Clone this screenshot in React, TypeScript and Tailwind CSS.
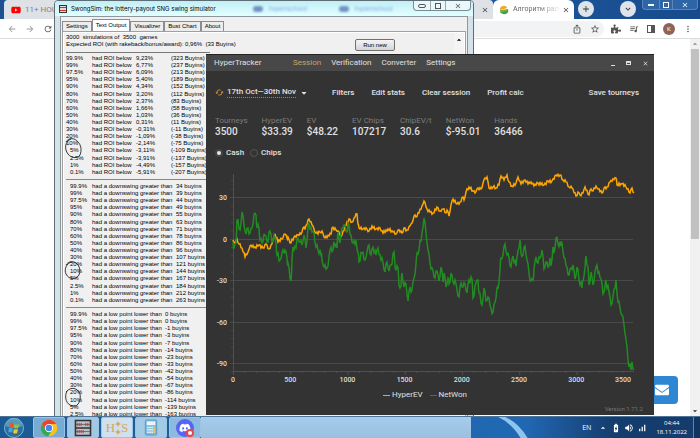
import React, { useState } from 'react'
import { FaYoutube, FaEnvelope, FaDiscord, FaPuzzlePiece, FaCaretDown } from 'react-icons/fa'
import {
  MdArrowBack, MdArrowForward, MdRefresh, MdStarBorder, MdIosShare, MdQueueMusic, MdMoreVert, MdClose, MdAdd,
  MdKeyboardArrowDown, MdCached, MdVolumeUp, MdSignalCellularAlt, MdBatteryChargingFull, MdArrowDropUp, MdArrowDropDown,
} from 'react-icons/md'

type Point = [number, number]

const levels = ['99.9%', '99%', '97.5%', '95%', '90%', '80%', '70%', '60%', '50%', '40%', '30%', '20%', '10%', '5%', '2.5%', '1%', '0.1%']

const roi = ['9,23%', '6,77%', '6,09%', '5,40%', '4,34%', '3,20%', '2,37%', '1,66%', '1,03%', '0,31%', '-0,31%', '-1,09%', '-2,14%', '-3,11%', '-3,91%', '-4,49%', '-5,91%']
const roiBuyins = [323, 237, 213, 189, 152, 112, 83, 58, 36, 11, -11, -38, -75, -109, -137, -157, -207]
const downswings = [34, 39, 44, 49, 55, 63, 71, 78, 86, 96, 107, 121, 144, 167, 184, 212, 263]
const lowPoints = [0, 0, -1, -3, -7, -14, -23, -33, -42, -54, -67, -86, -114, -139, -163]

const stats = [
  { label: 'Tourneys', value: '3500' },
  { label: 'HyperEV', value: '$33.39' },
  { label: 'EV', value: '$48.22' },
  { label: 'EV Chips', value: '107217' },
  { label: 'ChipEV/t', value: '30.6' },
  { label: 'NetWon', value: '$-95.01' },
  { label: 'Hands', value: '36466' },
]

// offsets from the chart origin (0 tourneys, $0)
const hyperEv: Point[] = [
  [0, 1], [2, 4], [4, 0], [6, 5], [9, 9], [12, 18], [15, 13], [17, 7], [22, 8], [26, 6], [30, 9], [33, 5], [36, 10], [39, 5],
  [42, -5], [45, 3], [49, 0], [52, -5], [54, -1], [55, -2], [57, 4], [61, -2], [65, -4], [69, -7], [71, -12], [72, -10],
  [76, -20], [79, -14], [81, -10], [83, -6], [87, -7], [89, -8], [91, -2], [96, -3], [98, -5], [99, -11], [103, -9],
  [105, -8], [107, -4], [109, -4], [112, -13], [116, -20], [119, -17], [122, -22], [124, -25], [125, -15], [126, -11],
  [130, -10], [134, -10], [136, -8], [139, -13], [143, -10], [147, -11], [150, -6], [155, -10], [160, -7], [163, -5],
  [165, -9], [169, -6], [171, -11], [174, -9], [177, -13], [179, -16], [181, -23], [183, -22], [186, -26], [189, -33],
  [191, -38], [194, -30], [197, -27], [200, -26], [204, -32], [207, -28], [210, -30], [213, -26], [214, -29], [216, -23],
  [218, -34], [220, -40], [224, -35], [227, -37], [230, -42], [231, -39], [233, -47], [236, -52], [240, -48], [242, -46],
  [244, -50], [248, -50], [250, -56], [252, -61], [254, -62], [256, -51], [260, -52], [263, -51], [266, -54], [268, -63],
  [271, -59], [274, -64], [276, -57], [279, -53], [283, -56], [285, -62], [288, -55], [292, -59], [295, -55], [298, -57],
  [301, -53], [305, -56], [311, -54], [315, -58], [319, -58], [323, -64], [327, -64], [330, -59], [333, -57], [336, -52],
  [339, -51], [343, -43], [345, -47], [347, -44], [350, -46], [352, -52], [356, -44], [358, -50], [360, -48], [363, -53],
  [365, -50], [369, -46], [371, -51], [374, -52], [377, -57], [380, -60], [383, -61], [384, -54], [389, -55], [393, -52],
  [397, -46], [399, -51], [401, -46],
]

const netWon: Point[] = [
  [0, 3], [1, 9], [3, 4], [4, -19], [7, -9], [9, -27], [11, -14], [13, -5], [15, -11], [17, -6], [19, -11], [21, -25],
  [23, -24], [24, -11], [26, -11], [27, 1], [29, 4], [32, -4], [34, 3], [37, -8], [39, 3], [41, -4], [43, 4], [44, 16],
  [47, 21], [49, 14], [51, 14], [52, 11], [54, 19], [55, 24], [58, 42], [59, 21], [60, 8], [63, 9], [65, -1], [67, 3],
  [69, 6], [71, -4], [73, 9], [75, -12], [76, -16], [79, -7], [81, -6], [83, 8], [85, 11], [88, 16], [89, 21], [91, 28],
  [94, 29], [96, 18], [98, 8], [100, 11], [101, 3], [104, 9], [105, -7], [107, 4], [109, -11], [111, -14], [114, -7],
  [115, -16], [118, -4], [120, 4], [123, 1], [125, 14], [126, 23], [129, 14], [132, 21], [134, 13], [136, 6], [138, 16],
  [140, 8], [143, 16], [145, 9], [148, 21], [150, 24], [152, 33], [154, 23], [156, 32], [158, 26], [161, 13], [162, 28],
  [165, 29], [166, 46], [168, 47], [169, 34], [171, 48], [173, 45], [175, 62], [177, 48], [179, 51], [181, 39], [183, 25],
  [184, 14], [186, 11], [189, -6], [191, -21], [193, -6], [195, 11], [197, 24], [199, 29], [201, 38], [204, 32], [206, 42],
  [208, 28], [210, 43], [211, 34], [213, 48], [215, 39], [216, 45], [218, 34], [220, 43], [222, 41], [224, 51], [226, 58],
  [228, 44], [230, 48], [232, 45], [234, 54], [236, 41], [239, 40], [240, 59], [243, 44], [245, 41], [246, 54], [249, 66],
  [251, 49], [253, 62], [255, 58], [258, 69], [260, 73], [262, 63], [264, 49], [265, 50], [267, 31], [268, 19], [270, 16],
  [272, 5], [274, 16], [276, 18], [278, 28], [280, 17], [283, 27], [285, 12], [287, 1], [288, 15], [290, 16], [292, 7],
  [294, 21], [296, 34], [298, 42], [300, 41], [301, 30], [303, 18], [305, 24], [307, 19], [309, 11], [311, 30], [313, 23],
  [315, 28], [317, 19], [318, 27], [320, 8], [321, 14], [323, -1], [325, 5], [328, 7], [329, 4], [331, 19], [334, 28],
  [336, 36], [338, 29], [340, 26], [342, 40], [344, 28], [346, 41], [349, 49], [350, 42], [352, 29], [353, 17], [355, 28],
  [356, 46], [358, 33], [360, 46], [363, 28], [366, 33], [368, 40], [370, 55], [372, 48], [373, 42], [376, 53], [378, 66],
  [380, 57], [383, 41], [385, 63], [387, 69], [389, 76], [391, 86], [393, 100], [395, 121], [398, 131], [399, 123], [401, 131],
]

// walks between the sampled points with a small zigzag
function jagged(points: Point[], amp: number) {
  const out: string[] = []
  points.forEach(([x, y], i) => {
    out.push(`${x},${y}`)
    const next = points[i + 1]
    if (!next) return
    const steps = Math.max(2, next[0] - x)
    for (let s = 1; s < steps; s++) {
      const t = s / steps
      const wobble = ((i + s) % 2 ? 1 : -1) * amp * (0.5 + ((i * 7 + s * 3) % 5) / 5)
      out.push(`${(x + (next[0] - x) * t).toFixed(1)},${(y + (next[1] - y) * t + wobble).toFixed(1)}`)
    }
  })
  return out.join(' ')
}

function Chart() {
  const ticks = Array.from({ length: 35 }, (_, i) => i)
  return (
    <svg viewBox="0 0 448 220" className="block w-full font-[Roboto,sans-serif]" role="img" aria-label="HyperEV and NetWon by tourneys">
      <g transform="translate(27 71)">
        {[-42, 0, 41, 83, 124].map((y, i) => (
          <g key={y}>
            <line x1="-3" x2="400" y1={y + 0.5} y2={y + 0.5} stroke="#4a4a4a" />
            <text x="-6" y={y + 3} textAnchor="end" fontSize="7" fill="#dcdcdc">{30 - i * 30}</text>
          </g>
        ))}
        <path d="M0.5 -65V132.500H401" fill="none" stroke="#505050" />
        {ticks.map(i => <line key={i} x1={i * 11.45 + 0.5} x2={i * 11.45 + 0.5} y1="132" y2={i % 5 ? 134 : 136} stroke="#505050" />)}
        {ticks.slice(0, 24).map(i => <line key={i} x1="-2" x2="0" y1={i * 8.3 - 58} y2={i * 8.3 - 58} stroke="#484848" />)}
        {[0, 500, 1000, 1500, 2000, 2500, 3000].map((n, i) => (
          <text key={n} x={i * 57.2} y="143" textAnchor="middle" fontSize="7" fill="#dcdcdc">{n}</text>
        ))}
        <text x="398" y="143" textAnchor="end" fontSize="7" fill="#dcdcdc">3500</text>
        <polyline points={jagged(hyperEv, 1.2)} fill="none" stroke="#ffa500" strokeWidth="1.500" />
        <polyline points={jagged(netWon, 2.8)} fill="none" stroke="#228b22" strokeWidth="1.500" />
      </g>
    </svg>
  )
}

function Browser() {
  return (
    <div className="flex min-h-0 flex-1 flex-col bg-white">
      <div className="flex h-[19px] shrink-0 justify-between bg-gradient-to-r from-[#1d4f92] via-[#2462a8] to-[#174a8c] pl-1">
        <div className="flex w-[489px] items-center rounded-t bg-[#dee1e6] pl-[7px] text-[8px] text-[#7d8186]">
          <FaYoutube className="mr-1 h-2.5 w-2.5 text-[#f00]" />
          <span>11+ HOURS</span>
          <MdClose className="ml-auto mr-1 h-2 w-2 text-[#444]" />
        </div>
        <div className="flex flex-1 items-center rounded-t-md bg-white pl-1.5 text-[7px]">
          <svg viewBox="0 0 10 10" className="mr-1 h-2.5 w-2.5">
            <path d="M1 5C0 1 7-1 8 3L5 4Z" fill="#f5a623" />
            <path d="M9 4c2 5-5 7-8 3l3-1Z" fill="#43a047" />
            <path d="M1 5l8-1-1 2-7 1Z" fill="#7cb342" />
          </svg>
          <span className="flex-1 whitespace-nowrap bg-gradient-to-r from-[#555] via-[#666] to-white bg-clip-text text-transparent">Алгоритм расч</span>
          <button aria-label="Close tab" className="mr-1"><MdClose className="h-2 w-2 text-[#444]" /></button>
        </div>
        <div className="flex w-[126px] shrink-0 justify-between pl-1">
          <button aria-label="New tab" className="mt-px flex h-4 w-4 items-center justify-center rounded-full bg-[#dfe3ea]"><MdAdd className="h-2.5 w-2.5 text-[#333]" /></button>
          <button aria-label="Search tabs" className="mt-px ml-[26px] flex h-4 w-4 items-center justify-center rounded-full bg-[#dfe3ea]"><MdKeyboardArrowDown className="h-2.5 w-2.5 text-[#333]" /></button>
          <div className="ml-auto mr-0.5 flex h-2.5 rounded-b border border-t-0 border-[#5c86b8] bg-[#2d65a6] text-white">
            <button aria-label="Minimize" className="flex w-4 items-center justify-center"><span className="h-0.5 w-1.5 bg-white" /></button>
            <button aria-label="Restore" className="flex w-3.5 items-center justify-center border-x border-[#5c86b8]"><span className="h-1.5 w-1.5 border border-white" /></button>
            <button aria-label="Close" className="flex w-6 items-center justify-center"><MdClose className="h-2 w-2" /></button>
          </div>
        </div>
      </div>
      <div className="flex h-5 shrink-0 items-center border-b border-[#dcdcdc] bg-white pr-[7px] pl-[7px] text-[#555]">
        <button aria-label="Back"><MdArrowBack className="h-2.5 w-2.5 text-[#999]" /></button>
        <button aria-label="Forward" className="ml-2"><MdArrowForward className="h-2.5 w-2.5 text-[#999]" /></button>
        <button aria-label="Reload" className="ml-2"><MdRefresh className="h-2.5 w-2.5" /></button>
        <div className="ml-2 flex h-4 flex-1 items-center justify-end gap-2 rounded-full bg-[#f1f3f4] pr-1">
          <MdIosShare className="h-2.5 w-2.5" />
          <MdStarBorder className="h-2.5 w-2.5" />
        </div>
        <div className="ml-[7px] flex items-center gap-2">
          <FaPuzzlePiece className="h-2.5 w-2.5" />
          <MdQueueMusic className="h-2.5 w-2.5" />
          <span className="h-2 w-2 border border-r-4 border-[#555]" />
          <span className="flex h-3 w-3 items-center justify-center rounded-full bg-[#8d6556] text-[6px] text-white">K</span>
          <MdMoreVert className="h-2.5 w-2.5" />
        </div>
      </div>
      <div className="flex flex-1 items-end justify-end">
        <button aria-label="Write to us" className="mb-3 flex h-7 w-9 items-center justify-center rounded bg-[#2f86d3] pl-1">
          <FaEnvelope className="h-3.5 w-3.5 text-white" />
        </button>
        <div className="ml-3 flex w-2.5 flex-col items-center self-stretch bg-[#f1f1f1]">
          <MdArrowDropUp className="h-2.5 w-2.5 text-[#888]" />
          <div className="h-[190px] w-2 bg-[#c1c1c1]" />
          <MdArrowDropDown className="mt-auto h-2.5 w-2.5 text-[#333]" />
        </div>
      </div>
    </div>
  )
}

function ResultTable({ text, textWidth, values, indentFrom }: { text: string; textWidth: string; values: string[][]; indentFrom: number }) {
  return (
    <table className={`border-collapse self-start whitespace-nowrap ${values.length === 17 ? 'h-[121px]' : 'h-[107px]'}`}>
      <tbody>
        {values.map((cells, i) => (
          <tr key={levels[i]}>
            <td className="p-0"><div className={`w-[26px] ${i >= indentFrom ? 'pl-1' : ''}`}>{levels[i]}</div></td>
            <td className="p-0"><div className={textWidth}>{text}</div></td>
            {cells.map((v, c) => <td key={c} className="p-0"><div className="w-[35px]">{v}</div></td>)}
          </tr>
        ))}
      </tbody>
    </table>
  )
}

function SwongSim() {
  const [tab, setTab] = useState('Text Output')
  return (
    <section className="absolute top-0 bottom-0 left-[54px] right-[226px] flex flex-col overflow-hidden rounded-t border border-[#5d6d75] bg-[#d5e2ea] px-[5px] font-['Liberation_Sans',sans-serif] text-[6px] leading-[7px] text-black">
      <header className="-mx-[5px] flex h-[15px] shrink-0 items-center bg-gradient-to-b from-[#c2eef5] to-[#e2ffff] pl-1">
        <span className="flex h-2 w-2 flex-col justify-around border border-[#333] bg-[#ddd]"><i className="h-px bg-[#c33]" /><i className="h-px bg-[#c33]" /></span>
        <h1 className="ml-1 w-[170px] whitespace-nowrap font-[Inter,sans-serif]">SwongSim: the lottery-payout SNG swing simulator</h1>
        <div className="ml-3 flex flex-1 gap-8 overflow-hidden whitespace-nowrap text-[7px] text-[#7fb0e8] blur-[1px]" aria-hidden="true">
          <span className="flex items-center gap-1.5"><i className="h-1.5 w-2.5 rounded-full bg-[#6f93c4]" />hyperschool</span>
          <span className="flex items-center gap-1.5"><i className="h-1.5 w-2.5 rounded-full bg-[#6f93c4]" />hyperschool</span>
        </div>
        <div className="mr-0.5 flex h-2.5 self-start rounded-b border border-t-0 border-[#7c8b94] bg-[#eaf8fb]">
          <button aria-label="Minimize" className="flex w-4 items-center justify-center"><span className="h-1 w-2 rounded-xs border border-[#555]" /></button>
          <button aria-label="Maximize" className="flex w-4 items-center justify-center border-x border-[#9aa7ae]"><span className="h-1.5 w-1.5 border border-[#555]" /></button>
          <button aria-label="Close" className="flex w-6 items-center justify-center"><MdClose className="h-2 w-2 text-[#555]" /></button>
        </div>
      </header>
      <div className="flex min-h-0 flex-1 flex-col border border-b-0 border-[#8d979c] bg-[#f0f0f0] px-px">
        <nav className="flex h-3.5 shrink-0 items-end">
          {['Settings', 'Text Output', 'Visualizer', 'Bust Chart', 'About'].map(t => (
            <button
              key={t}
              onClick={() => setTab(t)}
              className={t === tab
                ? 'h-3 border border-b-0 border-[#898c95] bg-white px-[3px]'
                : 'h-2.5 border border-b-0 border-[#898c95] bg-[#ededed] px-[3px]'}
            >
              {t}
            </button>
          ))}
        </nav>
        <div className="flex min-h-0 flex-1 border border-b-0 border-[#a0a0a0] bg-white p-px pb-0">
          <div className="flex min-w-0 flex-1 flex-col bg-[#f0f0f0] pt-px pl-0.5">
            <div className="flex h-[18px] shrink-0 justify-between whitespace-nowrap">
              <p className="whitespace-pre">{'3000  simulations of  3500  games'}<br />{'Expected ROI (with rakeback/bonus/award): 0,96%  (33 Buyins)'}</p>
              <button className="mt-[5px] mr-[59px] h-3 w-10 shrink-0 rounded-xs border border-[#707070] bg-gradient-to-b from-[#f4f4f4] to-[#d5d5d5]">Run new</button>
            </div>
            <div className="h-px w-36 shrink-0 bg-[#777]" />
            <div className="relative flex flex-col pt-0.5">
              <ResultTable text="had ROI below" textWidth="w-[44px]" indentFrom={13} values={roi.map((r, i) => [r, `(${roiBuyins[i]} Buyins)`])} />
              <hr className="my-[3px] h-px border-0 bg-[#888]" />
              <ResultTable text="had a downswing greater than" textWidth="w-[84px]" indentFrom={0} values={downswings.map(d => [`${d} buyins`])} />
              <hr className="my-[3px] h-px border-0 bg-[#888]" />
              <ResultTable text="had a low point lower than" textWidth="w-[73px]" indentFrom={0} values={lowPoints.map(l => [`${l} buyins`])} />
              <svg viewBox="0 0 20 380" className="absolute top-0.5 -left-0.5 h-[380px] w-5" fill="none" stroke="#222" strokeWidth="0.9">
                <path d="M7 84C1 86 0 94 4 99c3 4 9 5 12 1 2-5 1-10-2-13-3-4-9-5-12 0" />
                <path d="M8 207c-6 1-8 8-6 12 3 6 10 6 13 1 2-6 0-11-5-13-3-1-6 0-8 3" />
                <path d="M3 336c-3 6-1 14 6 15 6 1 8-7 7-12-2-6-9-8-14-2" />
              </svg>
            </div>
          </div>
          <div className="flex w-2.5 justify-center bg-[#f4f4f4] pt-0.5"><MdArrowDropUp className="h-2.5 w-2.5" /></div>
        </div>
      </div>
    </section>
  )
}

function HyperTracker() {
  const [mode, setMode] = useState('Cash')
  return (
    <main className="absolute top-[54px] bottom-[23px] left-[206px] right-[46px] flex flex-col overflow-hidden bg-[#333] font-[Roboto,sans-serif] text-[8px] leading-[10px] font-medium text-[#e0e0e0]">
      <header className="flex h-[17px] shrink-0 items-center border-t border-[#222] bg-[#484848] pr-[5px] pl-2 font-normal">
        <h1 className="w-[79px]">HyperTracker</h1>
        <nav className="flex gap-2.5">
          <button className="text-[#c9a468]">Session</button>
          <button>Verification</button>
          <button>Converter</button>
          <button>Settings</button>
        </nav>
        <div className="ml-auto flex items-center gap-[11px]">
          <button aria-label="Minimize" className="mt-1 h-px w-1 bg-[#ddd]" />
          <button aria-label="Maximize" className="h-1 w-[5px] border border-t-2 border-[#ddd]" />
          <button aria-label="Close"><MdClose className="h-[7px] w-[7px]" /></button>
        </div>
      </header>
      <div className="flex h-[43px] shrink-0 items-center pr-[15px] pl-[9px] whitespace-nowrap">
        <button className="flex w-[117px] items-center">
          <MdCached className="mr-[3px] h-[9px] w-[9px] text-[#e0a040]" />
          <span className="border-b border-dotted border-[#888]">17th Oct—30th Nov</span>
          <FaCaretDown className="ml-1 h-2 w-2" />
        </button>
        <div className="flex gap-[17px]">
          <button>Filters</button>
          <button>Edit stats</button>
          <button>Clear session</button>
          <button>Profit calc</button>
        </div>
        <button className="ml-auto">Save tourneys</button>
      </div>
      <dl className="mt-0.5 flex gap-3.5 px-[9px]">
        {stats.map(s => (
          <div key={s.label}>
            <dt className="font-normal text-[#7c7c7c]">{s.label}</dt>
            <dd className="text-[10px] leading-3">{s.value}</dd>
          </div>
        ))}
      </dl>
      <div className="mt-2.5 flex gap-1.5 px-[9px]">
        {['Cash', 'Chips'].map(m => (
          <label key={m} className="flex items-center gap-[3px]">
            <input
              type="radio"
              name="mode"
              checked={mode === m}
              onChange={() => setMode(m)}
              className="h-2 w-2 appearance-none rounded-full border border-[#555] checked:border-2 checked:border-[#444] checked:bg-[#e8e8e8]"
            />
            {m}
          </label>
        ))}
      </div>
      <div className="mt-2.5"><Chart /></div>
      <div className="mt-0.5 flex justify-center gap-[7px] pr-[10px] font-normal">
        <span className="flex items-center gap-0.5"><i className="h-px w-[7px] bg-[#ffa500]" />HyperEV</span>
        <span className="flex items-center gap-0.5"><i className="h-px w-[7px] bg-[#228b22]" />NetWon</span>
      </div>
      <p className="mt-[5px] mr-[11px] text-right text-[6px] leading-[8px] font-normal text-[#777]">Version 1.71.2</p>
    </main>
  )
}

const taskButton = 'flex h-full w-8 items-center justify-center rounded-xs border border-[#9cc4e4]'

function Taskbar() {
  return (
    <footer className="relative z-10 flex h-[22px] shrink-0 items-stretch border-t border-[#4f7396] bg-gradient-to-r from-[#1a5a94] via-[#2168b4] via-75% to-[#143c6c] to-88% font-['Open_Sans',sans-serif] text-[6px] leading-[9px] text-white">
      <button aria-label="Start" className="flex w-[33px] shrink-0 items-center pl-1">
        <svg viewBox="0 0 20 20" className="h-5 w-5">
          <circle cx="10" cy="10" r="9.500" fill="#2c6d9c" stroke="#75b4d6" />
          <path d="M1.500 8a8.500 8.500 0 0 1 17 0q-8.500 4-17 0" fill="#78b3d2" opacity=".6" />
          <path d="M5.500 5.500q2-1.500 4 0L9 9.500q-2-1.300-4 0Z" fill="#e95524" />
          <path d="M10.500 6q2 1.300 4.500 0l-.8 4q-2 1.200-4.200 0Z" fill="#8fc43f" />
          <path d="M4.800 10.500q2-1.400 4 0l-.6 4q-2-1.200-4 0Z" fill="#3fa9e8" />
          <path d="M9.800 11q2 1.200 4.200 0l-.8 4q-2 1.200-4 0Z" fill="#fcc72e" />
        </svg>
      </button>
      <div className="flex shrink-0 gap-0.5">
        <button aria-label="Chrome" className={`${taskButton} bg-[#78abd2]`}>
          <svg viewBox="0 0 48 48" className="h-[18px] w-[18px]">
            <circle cx="24" cy="24" r="22" fill="#fbc116" />
            <path d="M5 13A22 22 0 0 1 43 13L24 14 15 29Z" fill="#ea4335" />
            <path d="M5 13A22 22 0 0 0 22 46L33 29 15 29Z" fill="#34a853" />
            <circle cx="24" cy="24" r="11" fill="#fff" />
            <circle cx="24" cy="24" r="8.500" fill="#4285f4" />
          </svg>
        </button>
        <button aria-label="SwongSim" className={`${taskButton} bg-[#a3c8e3]`}>
          <svg viewBox="0 0 18 18" className="h-[18px] w-[18px]">
            <path d="M1.500 1.500h15v15h-15ZM1 9h16" fill="#b5c1ca" stroke="#333" strokeWidth="1.600" />
            <path d="M2 5.500h14M2 12.500h14" stroke="#555" strokeWidth=".7" />
            <path d="M3 5.500h5M11 5.500h4M3 12.500h7" stroke="#e0342b" strokeWidth="2.400" strokeDasharray="1.500 .5" />
          </svg>
        </button>
        <button aria-label="HyperTracker" className={`${taskButton} bg-[#cfe0ee] font-['Liberation_Serif',serif] text-[13px] text-[#d8a75c]`}>
          H
          <svg viewBox="0 0 6 16" className="h-4 w-1.5" fill="currentColor">
            <path d="M3 1l1 2 2 1-2 1-1 2-1-2-2-1 2-1ZM3 9l1 2 2 1-2 1-1 2-1-2-2-1 2-1Z" />
          </svg>
          S
        </button>
        <button aria-label="Calculator" className={`${taskButton} bg-[#a3cbe6]`}>
          <svg viewBox="0 0 14 18" className="h-[17px] w-3.5">
            <rect x="1" y="1" width="12" height="16" rx="1" fill="#7fb9de" stroke="#5799c6" />
            <rect x="2.500" y="2.500" width="9" height="4" fill="#e8f5fb" />
            <path d="M3 9h6M3 11.500h6M3 14h6" stroke="#eef7fc" strokeWidth="1.600" strokeDasharray="1.600 .6" />
            <path d="M10.500 8v7" stroke="#e9c46a" strokeWidth="1.600" />
          </svg>
        </button>
        <button aria-label="Discord" className={`${taskButton} bg-[#8dbbdf]`}>
          <span className="relative flex h-[18px] w-[18px] items-center justify-center rounded-full bg-[#5865f2]">
            <FaDiscord className="h-3 w-3" />
            <i className="absolute right-0 bottom-0 h-2 w-2 rounded-full border-2 border-[#ef4444] bg-white" />
          </span>
        </button>
      </div>
      <div className="h-full w-[270px] bg-gradient-to-b from-[#a5ccee] to-[#9cbfdd]" />
      <svg viewBox="0 0 110 21" preserveAspectRatio="none" className="h-full min-w-0 flex-1">
        <path d="M27 0q14 7 22 21h7Q47 6 34 0Z" fill="#8fc4f0" />
      </svg>
      <div className="flex shrink-0 items-center gap-[3px] pr-1.5">
        <span className="mr-1 text-[7px]">EN</span>
        <MdArrowDropUp className="h-2.5 w-2.5" />
        <MdBatteryChargingFull className="h-2.5 w-2.5" />
        <MdVolumeUp className="h-2.5 w-2.5" />
        <MdSignalCellularAlt className="h-2.5 w-2.5" />
        <time className="ml-1.5 text-center">04:44<br />18.11.2022</time>
      </div>
      <button aria-label="Show desktop" className="w-[7px] shrink-0 border-l border-[#5c86b0] bg-[#123560]" />
    </footer>
  )
}

export default function App() {
  return (
    <div className="relative flex h-screen flex-col overflow-hidden font-[Roboto,sans-serif]">
      <Browser />
      <SwongSim />
      <HyperTracker />
      <Taskbar />
    </div>
  )
}
